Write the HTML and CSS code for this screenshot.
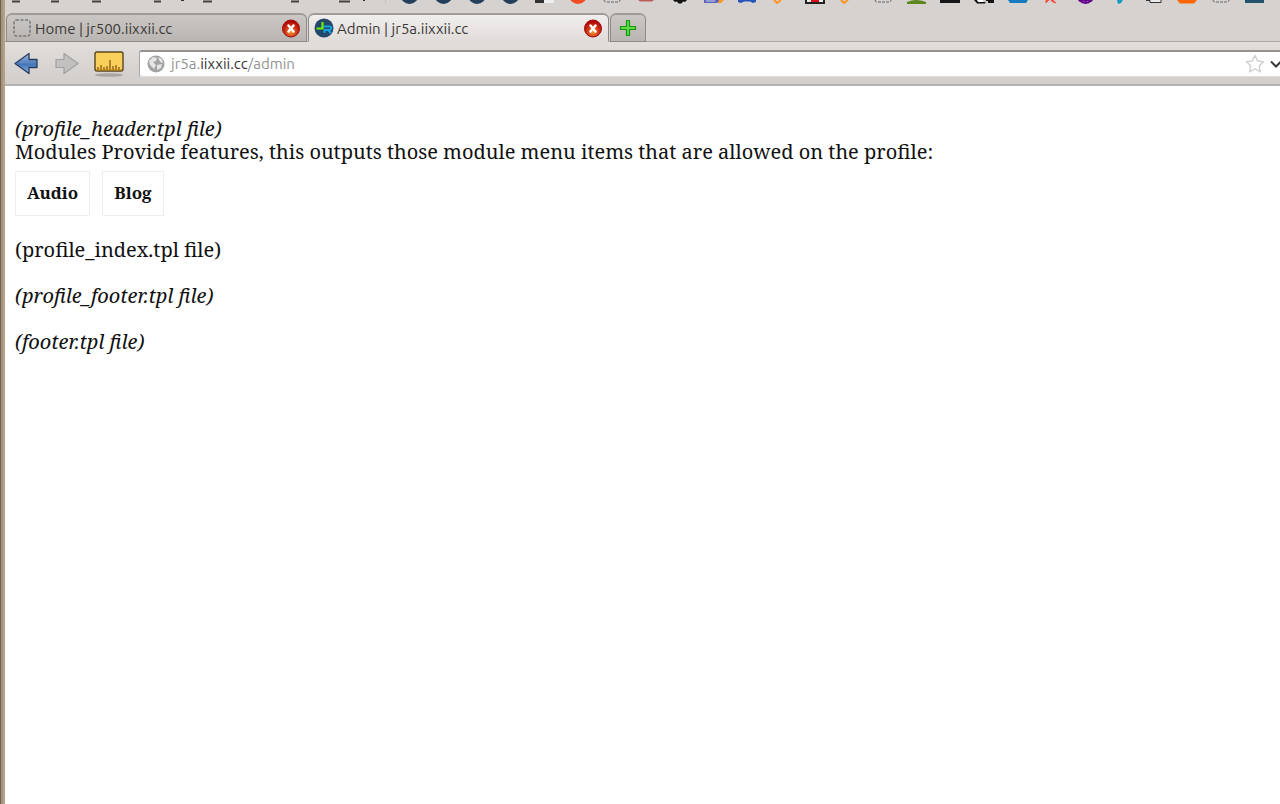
FILE: index.html
```html
<!DOCTYPE html>
<html lang="en">
<head>
<meta charset="utf-8">
<title>Admin | jr5a.iixxii.cc</title>
<link rel="stylesheet" href="styles.css">
</head>
<body>
<div class="window">
  <header class="chrome">
    <div class="bookmarks">
      <svg width="1275" height="5" viewBox="5 0 1275 5" aria-hidden="true">
        <path d="M12 1.500h8M51 1.500h8M92 1.500h9M154 1.500h7M203 1.500h9M291 1.500h8M339 1.500h11" stroke="#45423f" stroke-width="2"/>
        <path d="M181 .5h3M363 .5h2" stroke="#333"/>
        <path d="M385.500 0v3" stroke="#c4bfba"/>
        <g fill="#243f5c"><circle cx="409.500" cy="-5" r="9"/><circle cx="443.500" cy="-5" r="9"/><circle cx="477" cy="-5" r="9"/><circle cx="510.500" cy="-5" r="9"/></g>
        <path d="M535 0h9v3h-9z" fill="#333"/><path d="M544 0h10v3h-10z" fill="#eee"/>
        <circle cx="578" cy="-5" r="9" fill="#f04b23"/>
        <path d="M604 0q0 2 3 2h10q3 0 3-2M875 0q0 2 3 2h10q3 0 3-2M1213 0q0 2 3 2h10q3 0 3-2" fill="none" stroke="#666" stroke-dasharray="3 1"/>
        <path d="M638 0h16l-2 1.500h-12z" fill="#bd5c5c"/>
        <path d="M673 0h14l-2 2-2-.5-1.500 2h-3l-1.500-2-2 .5z" fill="#111"/>
        <path d="M704 0h16v2l-4 1h-12z" fill="#5a64bd"/><path d="M706 1h9" stroke="#d5d6ef"/><path d="M719 0h5l-3 3h-3z" fill="#ff981c"/>
        <path d="M738 0h18v2l-3 1-3-1.500h-6l-3 1.500-3-1z" fill="#2852bd"/>
        <path d="M774 0l3 3 4-3M841 0l3 3 4-3" fill="none" stroke="#ff941d" stroke-width="2"/>
        <path d="M805 0h20v4h-20z" fill="#222"/><path d="M807 0h16v2h-16z" fill="#eee"/><path d="M811 0h8v2h-8z" fill="#d9101a"/>
        <path d="M907 4V2q9-4 19 0v2z" fill="#5d871e"/><path d="M940 0h20v3h-20z" fill="#171717"/>
        <path d="M974 0h3l1 2h8V0h8v3h-6V1h-2l-1 2.500h-8z" fill="#111"/><path d="M977 0h6v2h-4z" fill="#fff"/>
        <path d="M1008 0h20l-2 3h-16z" fill="#167bc0"/>
        <path d="M1046 0h3l-3 3zM1051 0h2l3 3-4-1.500z" fill="#f15248" stroke="#f15248"/>
        <circle cx="1085.500" cy="-5" r="8" fill="none" stroke="#64078c" stroke-width="2"/><path d="M1085.500 0v3M1079 .5h13" stroke="#64078c" stroke-width="2"/>
        <path d="M1117 0h6l-2 3-3 1z" fill="#159bc3"/>
        <path d="M1146 .5h4v2h11V0" fill="#eee" stroke="#333"/>
        <path d="M1177 0h20l-3 3.500h-14z" fill="#ff6801"/>
        <path d="M1245 0h19v3h-19z" fill="#24536d"/>
      </svg>
    </div>
    <nav class="tabs" aria-label="Tabs">
      <div class="tab">
        <svg class="favicon" width="20" height="20" viewBox="0 0 20 20" aria-hidden="true"><rect x="2" y="2" width="16" height="16" rx="2" fill="none" stroke="#555" stroke-dasharray="3 1.500"/></svg>
        <a class="tab-title" href="#home">Home | jr500.iixxii.cc</a>
        <button class="close" aria-label="Close Home tab"><svg width="20" height="20" viewBox="0 0 20 20"><use href="#close-icon"/></svg></button>
      </div>
      <div class="tab active">
        <svg class="favicon" width="20" height="20" viewBox="0 0 20 20" aria-hidden="true"><circle cx="10" cy="10" r="9.500" fill="#254868"/><path d="M9.500 8.500h6q2.500 0 1.500 2.500-.5 1-2 1h-4.500v3M14 12l3 3" fill="none" stroke="#12a6e5" stroke-width="1.800"/><path d="M8.500 4v6.500H2.500" fill="none" stroke="#69ee09" stroke-width="2.200"/></svg>
        <a class="tab-title" href="#admin">Admin | jr5a.iixxii.cc</a>
        <button class="close" aria-label="Close Admin tab"><svg width="20" height="20" viewBox="0 0 20 20">
          <defs><radialGradient id="red" cx=".5" cy=".7" r=".6"><stop stop-color="#f59a35"/><stop offset=".6" stop-color="#cc3016"/><stop offset="1" stop-color="#af0909"/></radialGradient></defs>
          <g id="close-icon"><circle cx="10" cy="10.500" r="8.500" fill="url(#red)" stroke="#a30909"/><path d="M7.500 7.500l5 6M12.500 7.500l-5 6" stroke="#fff" stroke-width="2.500" stroke-linecap="round"/></g></svg></button>
      </div>
      <button class="new-tab" aria-label="New tab"><svg width="20" height="20" viewBox="0 0 20 20"><path d="M8.500 2.500h3V8.500h6v3h-6v6h-3v-6h-6v-3h6z" fill="#5fdd43" stroke="#179512" stroke-width="1.200" stroke-linejoin="round"/></svg></button>
    </nav>
    <div class="toolbar">
      <button class="tool" aria-label="Back"><svg width="26" height="24" viewBox="0 0 26 24"><defs><linearGradient id="blue" x2="0" y2="1"><stop stop-color="#a2bfe2"/><stop offset=".55" stop-color="#4776b8"/><stop offset="1" stop-color="#8eb4e4"/></linearGradient></defs><path d="M2 12.500L16 2.500v6h8v8h-8v6z" fill="url(#blue)" stroke="#263e63" stroke-width="1.300" stroke-linejoin="round"/></svg></button>
      <button class="tool" aria-label="Forward" disabled><svg width="26" height="24" viewBox="0 0 26 24"><path d="M25 12.500L11 2.500v6H3v8h8v6z" fill="#c3c1bf" stroke="#a2a09e" stroke-width="1.200" stroke-linejoin="round"/></svg></button>
      <button class="tool" aria-label="Measure"><svg width="32" height="28" viewBox="0 0 32 28"><ellipse cx="16" cy="26" rx="14" ry="1.800" fill="#a9a5a1"/><rect x="2" y="3" width="28" height="19" rx="2" fill="#f9d05b" stroke="#59461d" stroke-width="1.400"/><path d="M5 21v-3M8 21v-5M11 21v-3M14 21v-4M17 21V11M20 21v-4M23 21v-5M26 21v-3" stroke="#8b5a10" stroke-width="1.300"/><path d="M3 21h26" stroke="#b88120"/></svg></button>
      <div class="address">
        <svg width="20" height="20" viewBox="0 0 20 20" aria-hidden="true"><circle cx="10" cy="10" r="8.500" fill="#a3a3a3"/><path d="M3 7l4-4 4 1-1 3-3 1 3 3-2 4-4-4zM12 3l4 2 1 4-3-1zM11 11l5-1-1 4-4 2z" fill="#e5e5e5"/></svg>
        <a class="url" href="#admin">jr5a.<span class="domain">iixxii.cc</span>/admin</a>
        <button class="bookmark" aria-label="Bookmark this page"><svg width="20" height="20" viewBox="0 0 20 20"><path d="M10 1.500l2.600 5.400 6 .8-4.400 4.200 1.200 6-5.400-3-5.400 3 1.200-6L1.400 7.700l6-.8z" fill="#fff" stroke="#d2d2d2" stroke-width="1.500" stroke-linejoin="round"/></svg></button>
        <button class="history" aria-label="Show history"><svg width="12" height="12" viewBox="0 0 12 12"><path d="M1 3.500l5 5 5-5" fill="none" stroke="#393939" stroke-width="2"/></svg></button>
      </div>
    </div>
  </header>
  <main class="page">
    <p><em>(profile_header.tpl file)</em></p>
    <p>Modules Provide features, this outputs those module menu items that are allowed on the profile:</p>
    <nav class="modules" aria-label="Modules"><a href="#audio">Audio</a><a href="#blog">Blog</a></nav>
    <p class="file">(profile_index.tpl file)</p>
    <p class="file"><em>(profile_footer.tpl file)</em></p>
    <p class="file"><em>(footer.tpl file)</em></p>
  </main>
</div>
</body>
</html>
```
FILE: styles.css
```css
* { box-sizing: border-box; }
body { margin: 0; background: #fff; }
button { border: 0; padding: 0; background: none; display: flex; }
a { color: inherit; text-decoration: none; }
svg { flex: none; display: block; }
.window {
  min-height: 100vh;
  border-left: 5px solid #b09c82;
  border-image: linear-gradient(to right, #70604f 0 1px, #a39580 1px 3px, #b6a184 3px 5px) 0 0 0 5;
  overflow: hidden;
}
.chrome { background: #d6d2cf; font-family: Ubuntu, "Noto Sans", sans-serif; font-size: 15px; color: #3b3937; }
.bookmarks { height: 13px; overflow: hidden; }
.tabs { display: flex; height: 29px; gap: 1px; padding-left: 1px; border-bottom: 1px solid #aaa6a2; }
.tab {
  width: 301px; height: 29px; display: flex; align-items: center; gap: 3px; padding: 0 5px;
  border: 1px solid #8e8a86; border-top: 2px solid #9f9b98; border-radius: 6px 6px 0 0;
  background: linear-gradient(#cbc7c4, #b9b5b2);
}
.tab.active { background: linear-gradient(#f0eeed, #e0dcda); border-bottom-color: #e0dcda; }
.tab-title { flex: 1; white-space: nowrap; }
.new-tab {
  width: 36px; height: 29px; align-items: center; justify-content: center;
  border: 1px solid #8e8a86; border-top: 2px solid #9f9b98; border-radius: 6px 6px 0 0;
  background: linear-gradient(#cbc7c4, #b9b5b2);
}
.toolbar {
  height: 44px; display: flex; align-items: center; padding-left: 8px; gap: 14px;
  background: linear-gradient(#e2dedc, #d1cdca); border-bottom: 2px solid #b6b2af;
}
.address {
  flex: 1; height: 27px; display: flex; align-items: center; gap: 5px; padding-left: 6px;
  background: #fff; border: 1px solid #aaa6a2; border-top: 2px solid #97938f; border-right: 0;
  border-bottom-color: #e0dcda; border-radius: 3px 0 0 3px;
}
.url { flex: 1; color: #929292; }
.domain { color: #333; }
.history { margin-right: -2px; }
.page {
  padding: 31px 10px; color: #111;
  font-family: "Noto Serif", "Droid Serif", "DejaVu Serif Condensed", "Liberation Serif", serif;
  font-size: 20px; line-height: 23px;
}
.page p { margin: 0; }
.modules { display: flex; gap: 12px; margin: 8px 0 22px; font-size: 17px; font-weight: bold; }
.modules a { border: 1px solid #eee; padding: 9px 11px 11px; }
.page .file { margin-bottom: 23px; }
```
